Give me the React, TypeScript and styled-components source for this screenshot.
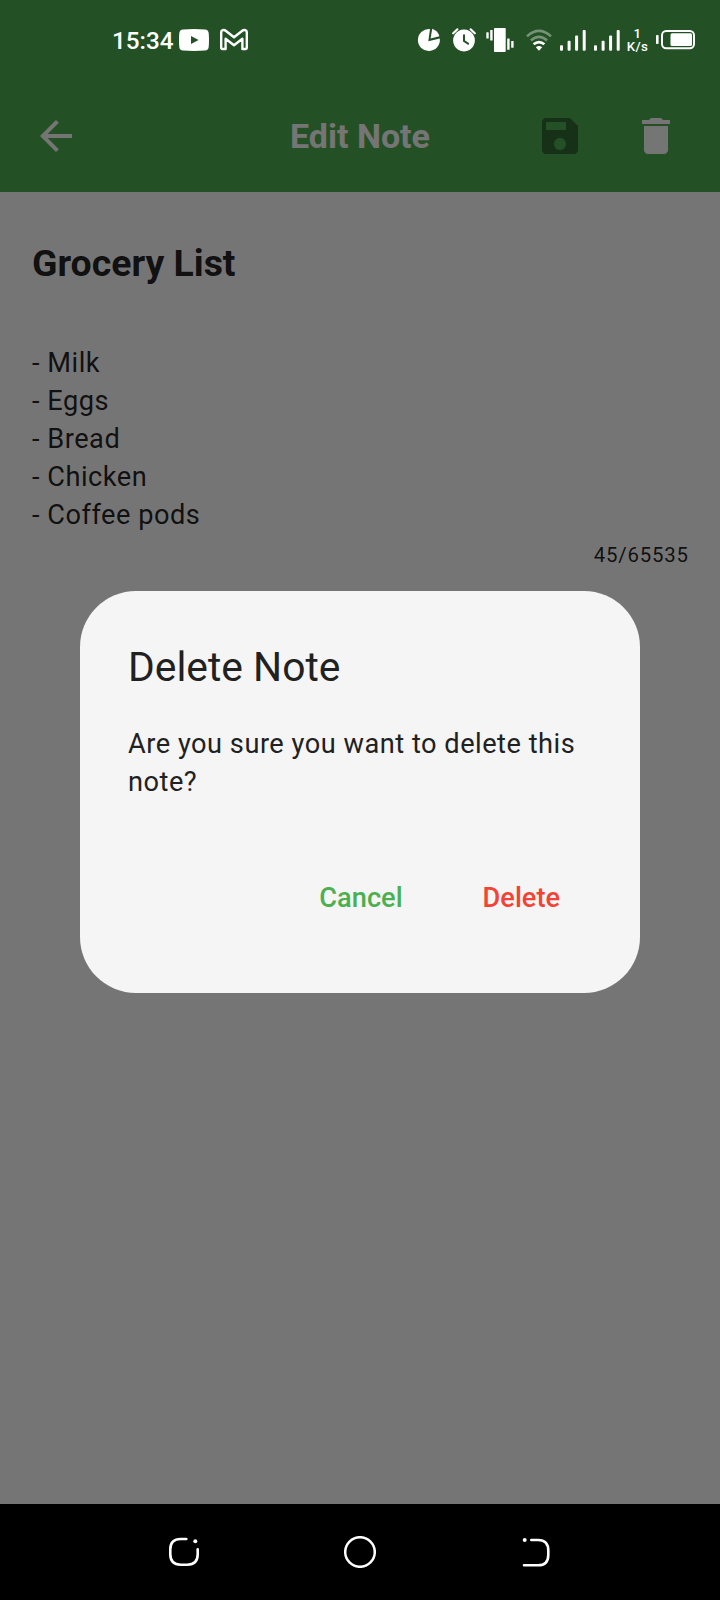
import React from "react";
import styled, { createGlobalStyle } from "styled-components";

const GlobalStyle = createGlobalStyle`
  * { box-sizing: border-box; }
  html, body { margin: 0; padding: 0; background: #fff; }
  body { font-family: Roboto, "Liberation Sans", sans-serif; }
  h1, h2, p { margin: 0; }
  button { border: 0; background: none; padding: 0; font: inherit; }
`;

const Screen = styled.div`
  position: relative;
  width: 720px;
  height: 1600px;
  display: flex;
  flex-direction: column;
  overflow: hidden;
  background: #fff;
`;

const StatusBar = styled.header`
  flex: none;
  display: flex;
  align-items: center;
  justify-content: space-between;
  height: 80px;
  padding: 0 24px 0 112px;
  background: #4caf50;
  color: #fff;
`;

const StatusGroup = styled.div<{ $gap: number }>`
  position: relative;
  z-index: 2;
  display: flex;
  align-items: center;
  gap: ${(p) => p.$gap}px;
`;

const Clock = styled.span`
  width: 67px;
  padding-top: 2px;
  font-size: 24.3px;
  line-height: 32px;
  font-weight: 500;
  white-space: nowrap;
`;

const Speed = styled.span`
  display: flex;
  flex-direction: column;
  align-items: center;
  width: 27px;
  font-size: 13.3px;
  line-height: 13px;
  font-weight: 500;
  letter-spacing: 0.3px;
`;

const Glyph = styled.svg`
  display: block;
  flex: none;
`;

const AppBar = styled.div`
  flex: none;
  display: grid;
  grid-template-columns: 224px 272px 224px;
  align-items: center;
  height: 112px;
  background: #4caf50;
  color: #fff;
`;

const AppTitle = styled.h1`
  text-align: center;
  font-size: 34px;
  line-height: 40px;
  font-weight: 700;
`;

const BackButton = styled.button`
  width: 48px;
  height: 48px;
  margin-left: 32px;
  color: #fff;
`;

const Actions = styled.div`
  display: flex;
  gap: 48px;
  padding-left: 40px;
`;

const IconButton = styled.button<{ $color: string }>`
  width: 48px;
  height: 48px;
  color: ${(p) => p.$color};
`;

const Note = styled.main`
  flex: 1;
  padding: 48px 32px 0;
  color: rgba(0, 0, 0, 0.87);
`;

const NoteTitle = styled.h2`
  font-size: 37.4px;
  line-height: 46px;
  font-weight: 700;
`;

const NoteBody = styled.p`
  margin-top: 58px;
  font-size: 27.2px;
  line-height: 38px;
  letter-spacing: 0.51px;
  white-space: pre-line;
`;

const Counter = styled.p`
  margin: 9px -0.8px 0 0;
  text-align: right;
  font-size: 20.4px;
  line-height: 24px;
  letter-spacing: 0.8px;
`;

const NavBar = styled.nav`
  flex: none;
  display: flex;
  justify-content: center;
  height: 96px;
  background: #000;
`;

const NavButton = styled.button`
  display: flex;
  align-items: center;
  justify-content: center;
  width: 176px;
`;

const Scrim = styled.div`
  position: absolute;
  inset: 0 0 96px;
  z-index: 1;
  display: flex;
  justify-content: center;
  align-items: flex-start;
  padding-top: 591px;
  background: rgba(0, 0, 0, 0.541);
`;

const Dialog = styled.section`
  width: 560px;
  height: 402px;
  padding: 48px;
  border-radius: 56px;
  background: #f5f5f5;
  color: #212121;
`;

const DialogTitle = styled.h2`
  font-size: 40.8px;
  line-height: 56px;
  font-weight: 400;
`;

const DialogText = styled.p`
  margin-top: 30px;
  font-size: 27.2px;
  line-height: 38px;
  letter-spacing: 0.51px;
`;

const DialogActions = styled.div`
  display: flex;
  justify-content: flex-end;
  gap: 16px;
  margin-top: 57px;
`;

const TextButton = styled.button<{ $color: string }>`
  height: 80px;
  padding: 0 32px;
  font-size: 27.2px;
  line-height: 38px;
  font-weight: 500;
  color: ${(p) => p.$color};
`;

type IconProps = { x: number; w: number; y?: number; h?: number; children: React.ReactNode };

// Status and navigation glyphs share the screen's coordinate space.
const Icon = ({ x, w, y = 24, h = 32, children }: IconProps) => (
  <Glyph width={w} height={h} viewBox={`${x} ${y} ${w} ${h}`} fill="#fff">
    {children}
  </Glyph>
);

const MaterialIcon = ({ d }: { d: string }) => (
  <Glyph width="48" height="48" viewBox="0 0 24 24" fill="currentColor">
    <path d={d} />
  </Glyph>
);

const Signal = () => (
  <Icon x={560} w={26}>
    <rect x="560" y="45.3" width="3" height="5.5" rx="1" />
    <rect x="567.6" y="40.7" width="3" height="10.1" rx="1" />
    <rect x="575.1" y="35.5" width="3" height="15.3" rx="1" />
    <rect x="582.7" y="30" width="3" height="20.8" rx="1" />
  </Icon>
);

export default function App() {
  return (
    <>
      <GlobalStyle />
      <Screen>
        <StatusBar>
          <StatusGroup $gap={11}>
            <StatusGroup $gap={0}>
              <Clock>15:34</Clock>
              <Icon x={179} w={30}>
                <path fillRule="evenodd" d="M183 29.4Q194 28.6 205 29.4Q208.4 29.7 208.7 33Q209.3 40 208.7 47Q208.4 50.3 205 50.6Q194 51.4 183 50.6Q179.6 50.3 179.3 47Q178.7 40 179.3 33Q179.6 29.7 183 29.4ZM191 36V44L198.6 40Z" />
              </Icon>
            </StatusGroup>
            <Icon x={220} w={28}>
              <path
                d="M222.6 30.2Q221.2 30.4 221.2 32.2V47.5Q221.2 49 222.6 49H225.6V38.8L234 45.2L242.4 38.8V49H245.4Q246.8 49 246.8 47.5V32.2Q246.8 30.4 245.4 30.2Q243.7 29.6 242.3 30.7L234 37.3L225.7 30.7Q224.3 29.6 222.6 30.2Z"
                fill="none"
                stroke="#fff"
                strokeWidth="2.4"
                strokeLinejoin="round"
              />
            </Icon>
          </StatusGroup>
          <StatusGroup $gap={4}>
            <StatusGroup $gap={8}>
              <Icon x={416} w={26}>
                <path d="M430 29.1A11 11 0 1 0 439.8 38.6L428.3 41.2Z" />
                <path d="M432.2 28.7A11 11 0 0 1 439.4 36.3L430.6 38.4Z" />
              </Icon>
              <Icon x={450} w={28}>
                <path fillRule="evenodd" d="M464 29.6A10.9 10.9 0 1 1 463.99 29.6ZM463 34.6V41.6L468.3 44.9L469.3 43.3L465 40.6V34.6Z" />
                <path d="M453.2 33.3L457.4 29.3M474.8 33.3L470.6 29.3" stroke="#fff" strokeWidth="2.2" strokeLinecap="round" />
              </Icon>
              <Icon x={486} w={28}>
                <rect x="494" y="28" width="11.7" height="24" rx="0.7" />
                <rect x="486.3" y="32.2" width="2.4" height="6.4" rx="0.5" />
                <rect x="490.2" y="30" width="2.4" height="10.5" rx="0.5" />
                <rect x="507.2" y="38.6" width="2.4" height="11.2" rx="0.5" />
                <rect x="511.2" y="41" width="2.4" height="6.8" rx="0.5" />
              </Icon>
              <Icon x={522} w={30}>
                <g fill="none" stroke="#fff" strokeWidth="2.6">
                  <path d="M527 36.4Q539 25.4 551 36.4" opacity="0.38" />
                  <path d="M530.9 40.5Q539 33.4 547.1 40.5" opacity="0.38" />
                  <path d="M533.6 44.3Q539 39.8 544.4 44.3" />
                </g>
                <path d="M535.8 47.2Q539 44.9 542.2 47.2L539 50.8Z" />
              </Icon>
              <Signal />
              <Signal />
            </StatusGroup>
            <StatusGroup $gap={5}>
              <Speed>
                <span>1</span>
                <span>K/s</span>
              </Speed>
              <Icon x={656} w={40}>
                <rect x="656" y="35" width="2.6" height="9" rx="0.8" />
                <rect x="662" y="31" width="32" height="17.2" rx="4.2" fill="none" stroke="#fff" strokeWidth="2" />
                <rect x="670.5" y="33.2" width="21.5" height="12.8" rx="1.5" />
              </Icon>
            </StatusGroup>
          </StatusGroup>
        </StatusBar>

        <AppBar>
          <BackButton aria-label="Back">
            <MaterialIcon d="M20 11H7.83l5.59-5.59L12 4l-8 8 8 8 1.41-1.41L7.83 13H20v-2z" />
          </BackButton>
          <AppTitle>Edit Note</AppTitle>
          <Actions>
            <IconButton aria-label="Save" $color="#326b35">
              <MaterialIcon d="M17 3H5c-1.11 0-2 .9-2 2v14c0 1.1.89 2 2 2h14c1.1 0 2-.9 2-2V7l-4-4zm-5 16c-1.66 0-3-1.34-3-3s1.34-3 3-3 3 1.34 3 3-1.34 3-3 3zm3-10H5V5h10v4z" />
            </IconButton>
            <IconButton aria-label="Delete" $color="#fff">
              <MaterialIcon d="M6 19c0 1.1.9 2 2 2h8c1.1 0 2-.9 2-2V7H6v12zM19 4h-3.5l-1-1h-5l-1 1H5v2h14V4z" />
            </IconButton>
          </Actions>
        </AppBar>

        <Note>
          <NoteTitle>Grocery List</NoteTitle>
          <NoteBody>{"- Milk\n- Eggs\n- Bread\n- Chicken\n- Coffee pods"}</NoteBody>
          <Counter>45/65535</Counter>
        </Note>

        <NavBar>
          <NavButton aria-label="Recent apps">
            <Icon x={168} w={32} y={1536} h={32}>
              <path
                d="M186.3 1539H180.7Q170.3 1539 170.3 1549.3V1554.3Q170.3 1564.7 180.7 1564.7H187.3Q197.7 1564.7 197.7 1554.3V1549.3"
                fill="none"
                stroke="#fff"
                strokeWidth="2.6"
                strokeLinecap="round"
              />
              <circle cx="195.3" cy="1541.3" r="2" />
            </Icon>
          </NavButton>
          <NavButton aria-label="Home">
            <Icon x={344} w={32} y={1536} h={32}>
              <circle cx="360" cy="1552" r="14.8" fill="none" stroke="#fff" strokeWidth="2.5" />
            </Icon>
          </NavButton>
          <NavButton aria-label="Back">
            <Icon x={520} w={32} y={1536} h={32}>
              <path
                d="M531.3 1540H538Q548.3 1540 548.3 1550.7V1554.7Q548.3 1565.3 538 1565.3H524"
                fill="none"
                stroke="#fff"
                strokeWidth="2.6"
                strokeLinecap="round"
              />
              <circle cx="524.7" cy="1540" r="2" />
            </Icon>
          </NavButton>
        </NavBar>

        <Scrim>
          <Dialog role="dialog">
            <DialogTitle>Delete Note</DialogTitle>
            <DialogText>Are you sure you want to delete this note?</DialogText>
            <DialogActions>
              <TextButton $color="#4caf50">Cancel</TextButton>
              <TextButton $color="#f44336">Delete</TextButton>
            </DialogActions>
          </Dialog>
        </Scrim>
      </Screen>
    </>
  );
}
